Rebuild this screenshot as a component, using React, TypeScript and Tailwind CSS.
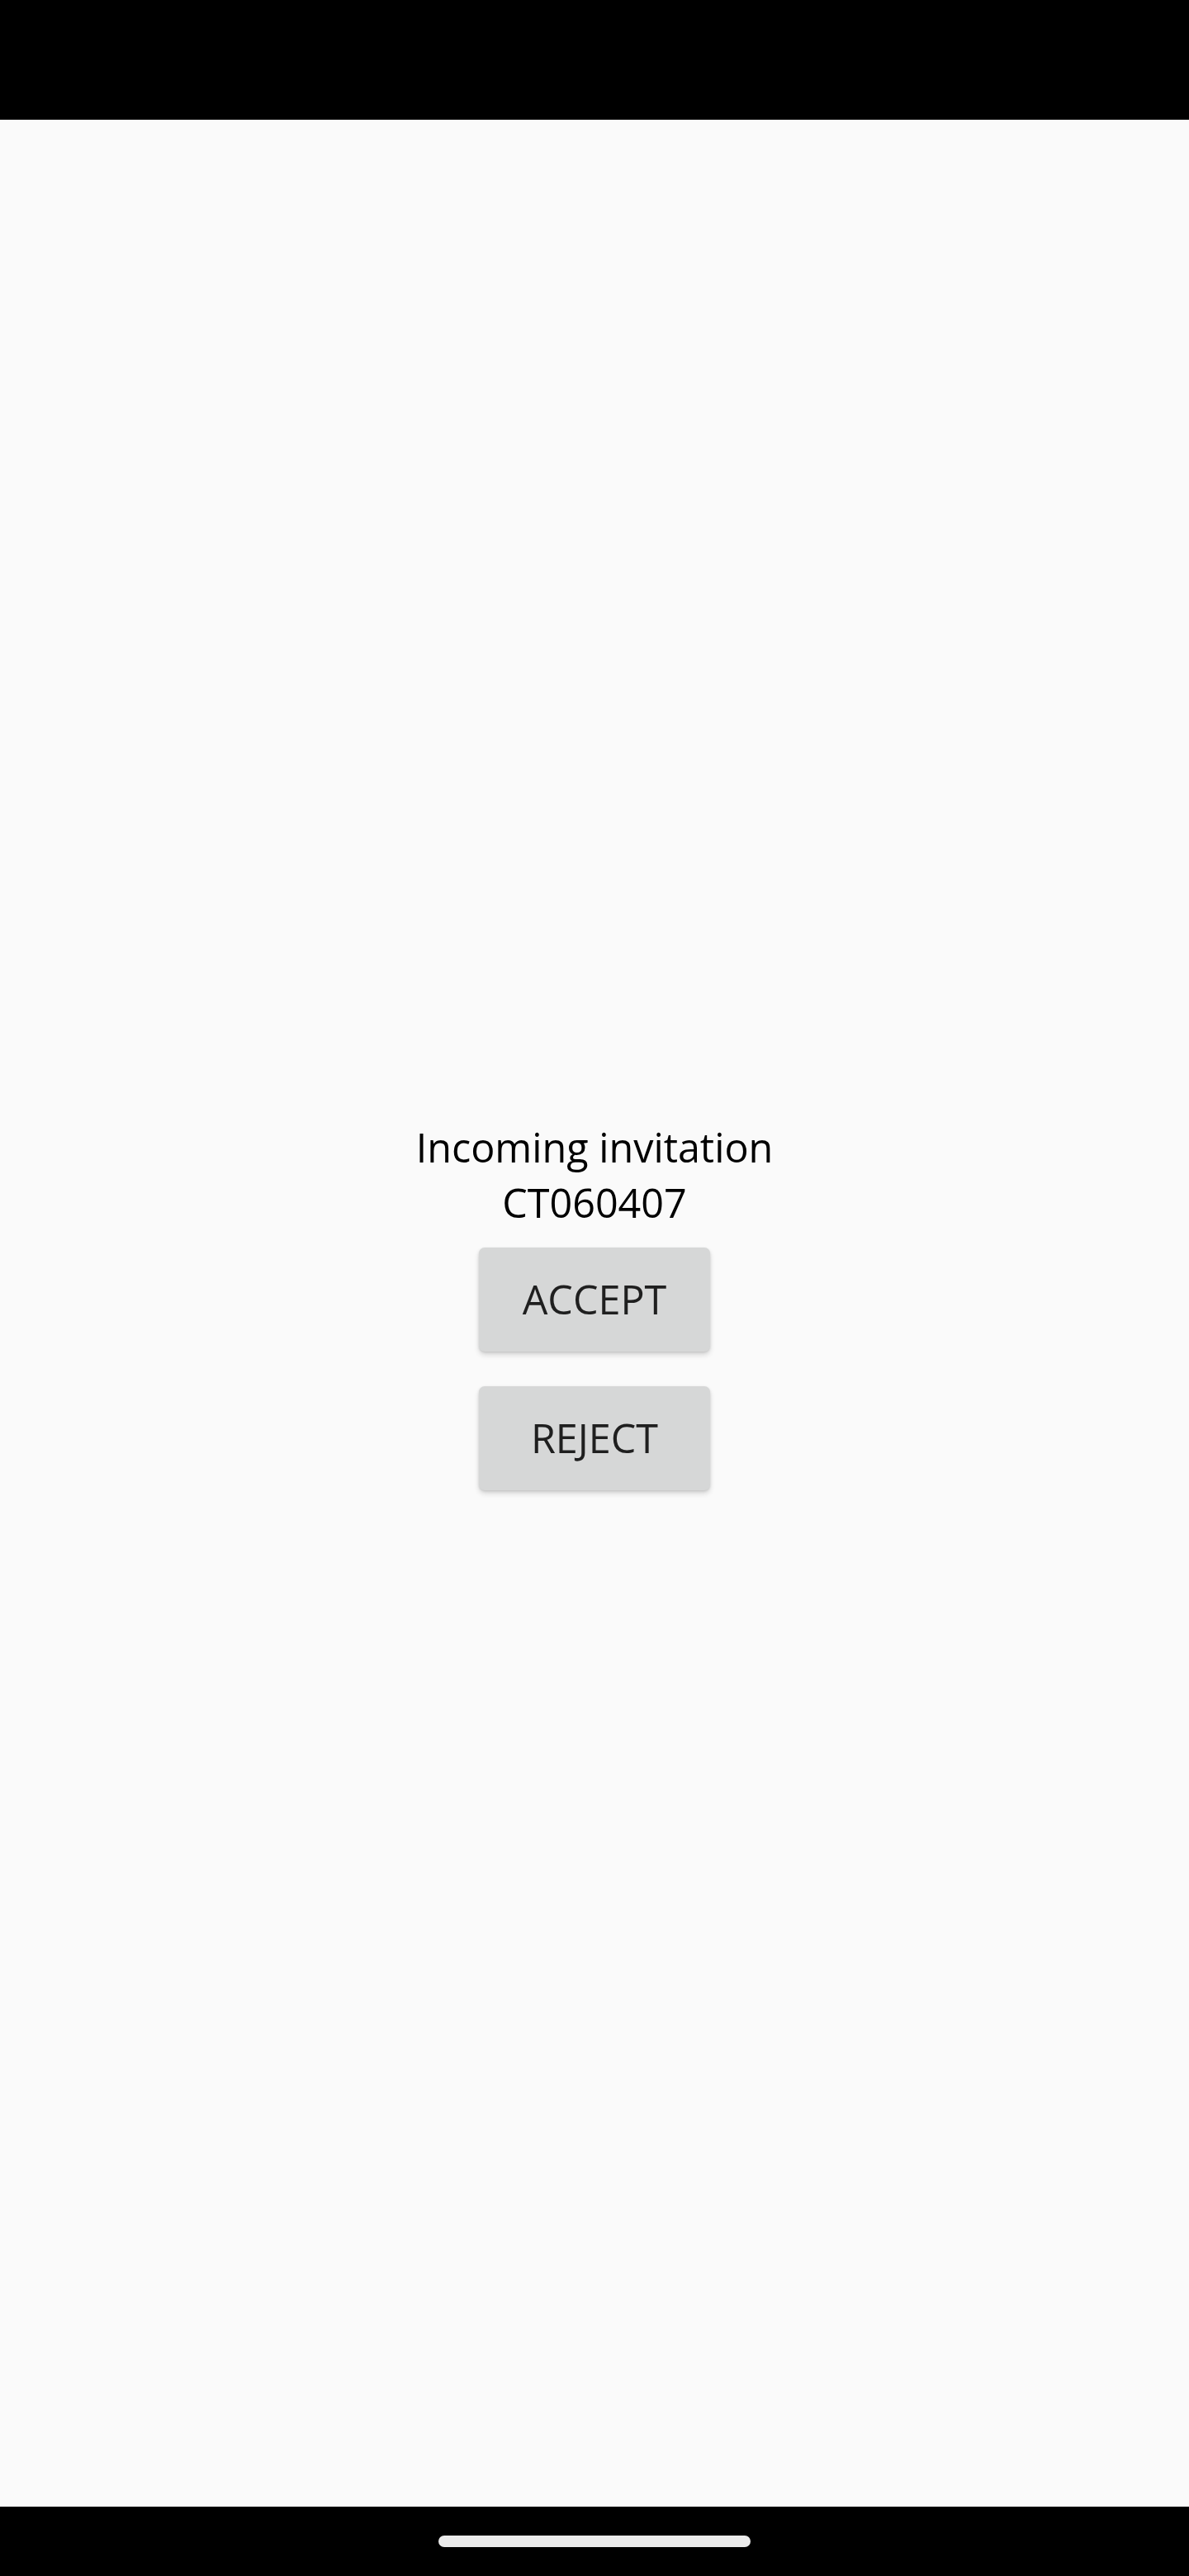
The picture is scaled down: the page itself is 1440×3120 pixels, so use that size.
export default function App() {
  return (
    <div className="w-[1440px] h-[3120px] flex flex-col bg-[#fafafa] font-['Open_Sans',sans-serif]">
      {/* status bar */}
      <div className="h-[145px] shrink-0 bg-black" />

      {/* content */}
      <main className="flex-1 flex flex-col items-center justify-center">
        <div className="flex flex-col items-center">
          <p className="text-center text-[48.5px] leading-[67px] text-black">
            Incoming invitation
            <br />
            CT060407
          </p>
          <button className="mt-[21px] w-[280px] h-[126px] rounded-[7px] bg-[#d6d7d7] text-[48.5px] leading-[67px] text-[#1f1f1f] shadow-[0_4px_6px_rgba(0,0,0,0.14),0_1px_3px_rgba(0,0,0,0.12)]">
            ACCEPT
          </button>
          <button className="mt-[42px] mb-[21px] w-[280px] h-[126px] rounded-[7px] bg-[#d6d7d7] text-[48.5px] leading-[67px] text-[#1f1f1f] shadow-[0_4px_6px_rgba(0,0,0,0.14),0_1px_3px_rgba(0,0,0,0.12)]">
            REJECT
          </button>
        </div>
      </main>

      {/* navigation bar */}
      <div className="h-[84px] shrink-0 bg-black flex justify-center pt-[35px]">
        <div className="w-[378px] h-[14px] rounded-full bg-[#ebebeb]" />
      </div>
    </div>
  );
}
